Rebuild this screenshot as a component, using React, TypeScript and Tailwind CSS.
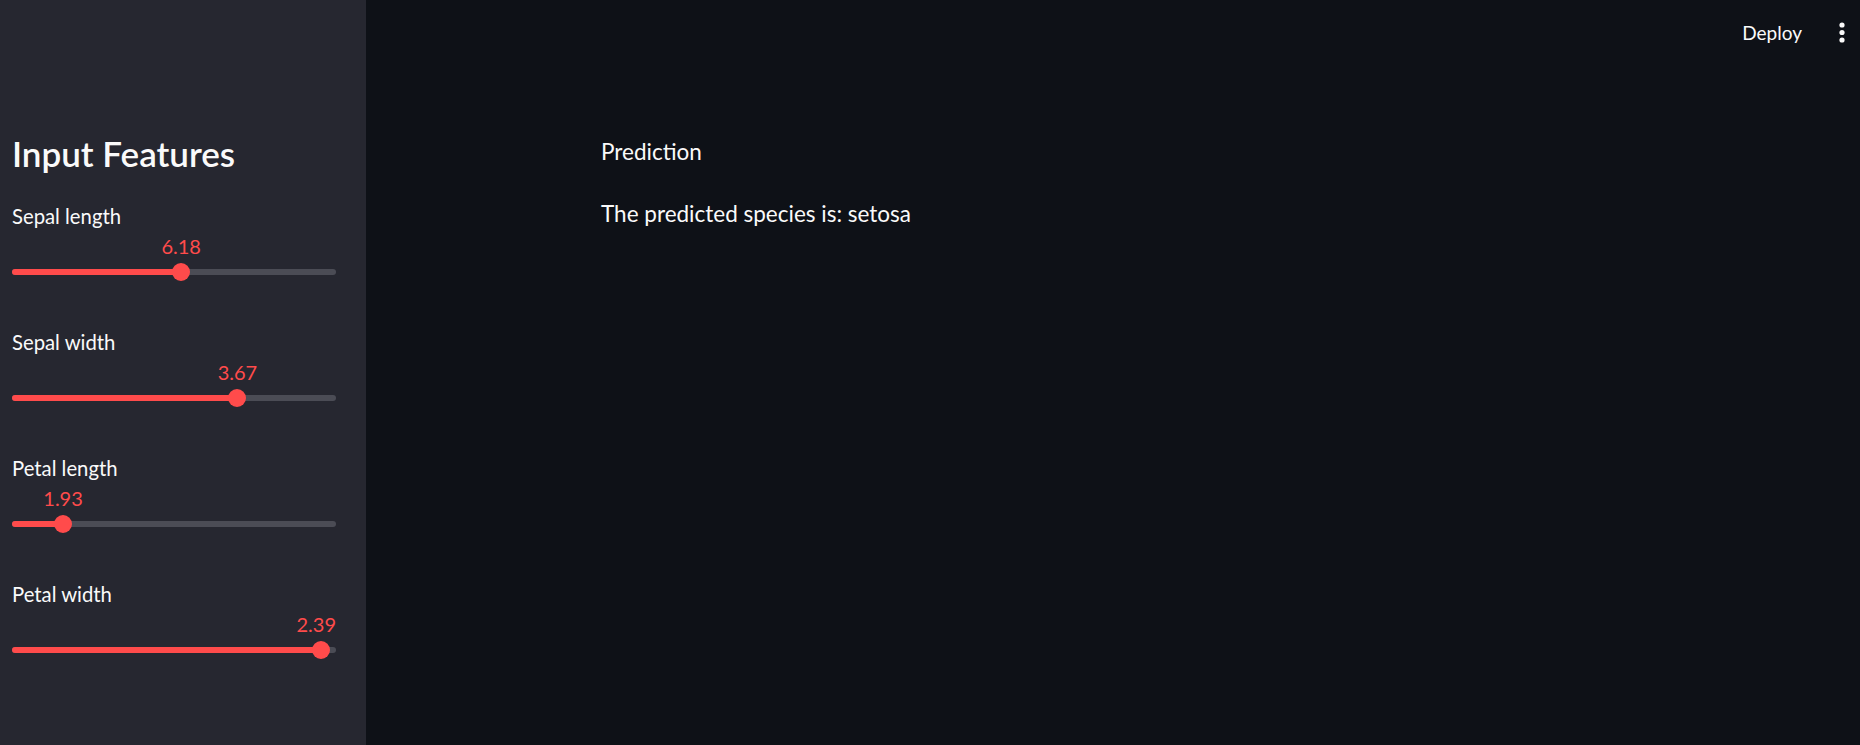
import React from "react";

type SliderDef = { label: string; value: number; min: number; max: number };

const sliders: SliderDef[] = [
  { label: "Sepal length", value: 6.18, min: 4.3, max: 7.9 },
  { label: "Sepal width", value: 3.67, min: 2.0, max: 4.4 },
  { label: "Petal length", value: 1.93, min: 1.0, max: 6.9 },
  { label: "Petal width", value: 2.39, min: 0.1, max: 2.5 },
];

function Slider({ s }: { s: SliderDef }) {
  const pct = ((s.value - s.min) / (s.max - s.min)) * 100;
  const clampRight = pct > 92;
  return (
    <div className="mb-[46px] flex flex-col">
      <div className="flex h-[27px] items-center text-[20.3px] text-[#fafafa]">{s.label}</div>
      <div className="relative h-[31px]">
        {clampRight ? (
          <span className="absolute right-0 top-1/2 -translate-y-1/2 text-[20px] leading-none text-[#ff4b4b]">
            {s.value.toFixed(2)}
          </span>
        ) : (
          <span
            className="absolute top-1/2 -translate-x-1/2 -translate-y-1/2 text-[20px] leading-none text-[#ff4b4b]"
            style={{ left: `${pct}%` }}
          >
            {s.value.toFixed(2)}
          </span>
        )}
      </div>
      <div className="flex h-[22px] items-center">
        <div className="relative h-[6px] w-full rounded-full bg-[#4b4c55]">
          <div className="h-full rounded-full bg-[#ff4b4b]" style={{ width: `${pct}%` }} />
          <div
            className="absolute top-1/2 h-[18px] w-[18px] -translate-x-1/2 -translate-y-1/2 rounded-full bg-[#ff4b4b]"
            style={{ left: `${pct}%` }}
          />
        </div>
      </div>
    </div>
  );
}

export default function App() {
  return (
    <div className="flex h-[745px] w-full overflow-hidden font-[Lato,sans-serif] text-[#fafafa]">
      <aside className="flex w-[366px] shrink-0 flex-col bg-[#262730] pl-[12px] pr-[30px] pt-[132px]">
        <h2 className="mb-[29px] h-[42px] text-[35px] font-semibold leading-[42px] text-[#fafafa]">
          Input Features
        </h2>
        {sliders.map((s) => (
          <Slider key={s.label} s={s} />
        ))}
      </aside>
      <main className="flex flex-1 flex-col bg-[#0e1117]">
        <header className="flex h-[66px] items-center justify-end pr-[15px]">
          <span className="text-[19px] text-[#fafafa]">Deploy</span>
          <svg className="ml-[37px]" width="6" height="22" viewBox="0 0 6 22" fill="#fafafa">
            <circle cx="3" cy="3" r="2.6" />
            <circle cx="3" cy="10.5" r="2.6" />
            <circle cx="3" cy="18" r="2.6" />
          </svg>
        </header>
        <section className="flex flex-col pl-[235px] pt-[68px] text-[22.5px]">
          <p className="flex h-[36px] items-center">Prediction</p>
          <p className="mt-[25.6px] flex h-[36px] items-center">The predicted species is: setosa</p>
        </section>
      </main>
    </div>
  );
}
